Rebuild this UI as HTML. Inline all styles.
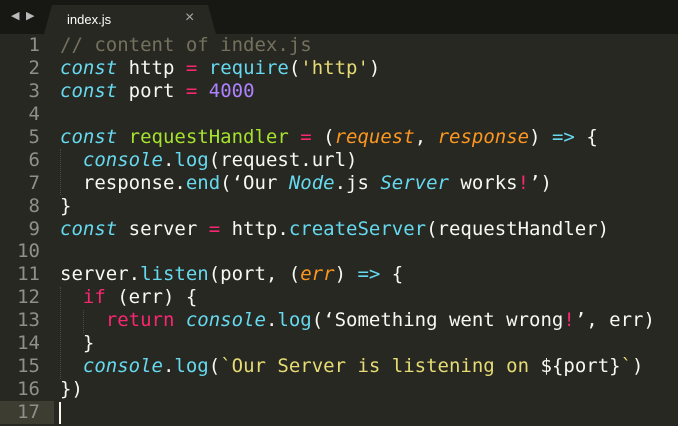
<!DOCTYPE html><html><head><style>
body{margin:0;width:678px;height:426px;background:#272822;overflow:hidden;position:relative;font-family:"DejaVu Sans Mono","Liberation Mono",monospace;}
.bar{position:absolute;left:0;top:0;width:678px;height:34px;background:#171814;}
.tab{position:absolute;left:44px;top:5px;width:172px;height:29px;background:#272822;clip-path:polygon(8px 0,164px 0,172px 29px,0 29px);}
.tab span{position:absolute;left:23px;top:7px;font:13px "Liberation Sans",sans-serif;color:#fff;}
.tab b{position:absolute;left:141px;top:4px;font:16px "Liberation Sans",sans-serif;color:#aaa;font-weight:normal}
.arr{position:absolute;top:9px;color:#bbb;font-size:11px;font-family:"DejaVu Sans",sans-serif}
.g{position:absolute;left:0;top:34px;width:40px;text-align:right;color:#8f908a;font-size:19px;line-height:22.93px}
.hl{position:absolute;left:0;top:401px;width:54px;height:23px;background:#3e3d32}
pre{position:absolute;left:60px;top:34px;margin:0;font-size:19px;line-height:22.93px;color:#f8f8f2;font-family:inherit}
.c{color:#75715e}.k{color:#66d9ef;font-style:italic}.f{color:#66d9ef}.p{color:#f92672}.n{color:#ae81ff}.s{color:#e6db74}.gr{color:#a6e22e}.o{color:#fd971f;font-style:italic}
.cur{position:absolute;left:59px;top:402px;width:2px;height:22px;background:#f8f8f0}
.ig{position:absolute;width:0;border-left:1px dotted #4a4a42}
</style></head><body>
<div class="bar"></div>
<div class="arr" style="left:11px">◀</div><div class="arr" style="left:26px">▶</div>
<div class="tab"><span>index.js</span><b>×</b></div>
<div class="hl"></div>
<div class="g">1<br>2<br>3<br>4<br>5<br>6<br>7<br>8<br>9<br>10<br>11<br>12<br>13<br>14<br>15<br>16<br>17</div>
<div class="ig" style="left:60px;top:149px;height:46px"></div>
<div class="ig" style="left:60px;top:287px;height:92px"></div>
<div class="ig" style="left:83px;top:310px;height:23px"></div>
<pre><span class="c">// content of index.js</span>
<span class="k">const</span> http <span class="p">=</span> <span class="f">require</span>(<span class="s">'http'</span>)
<span class="k">const</span> port <span class="p">=</span> <span class="n">4000</span>

<span class="k">const</span> <span class="gr">requestHandler</span> <span class="p">=</span> (<span class="o">request</span>, <span class="o">response</span>) <span class="k" style="font-style:normal">=&gt;</span> {
  <span class="k">console</span>.<span class="f">log</span>(request.url)
  response.<span class="f">end</span>(‘Our <span class="k">Node</span>.js <span class="k">Server</span> works<span class="p">!</span>’)
}
<span class="k">const</span> server <span class="p">=</span> http.<span class="f">createServer</span>(requestHandler)

server.<span class="f">listen</span>(port, (<span class="o">err</span>) <span class="k" style="font-style:normal">=&gt;</span> {
  <span class="p">if</span> (err) {
    <span class="p">return</span> <span class="k">console</span>.<span class="f">log</span>(‘Something went wrong<span class="p">!</span>’, err)
  }
  <span class="k">console</span>.<span class="f">log</span>(<span class="s">`Our Server is listening on </span>${port}<span class="s">`</span>)
})
</pre>
<div class="cur"></div>
</body></html>
